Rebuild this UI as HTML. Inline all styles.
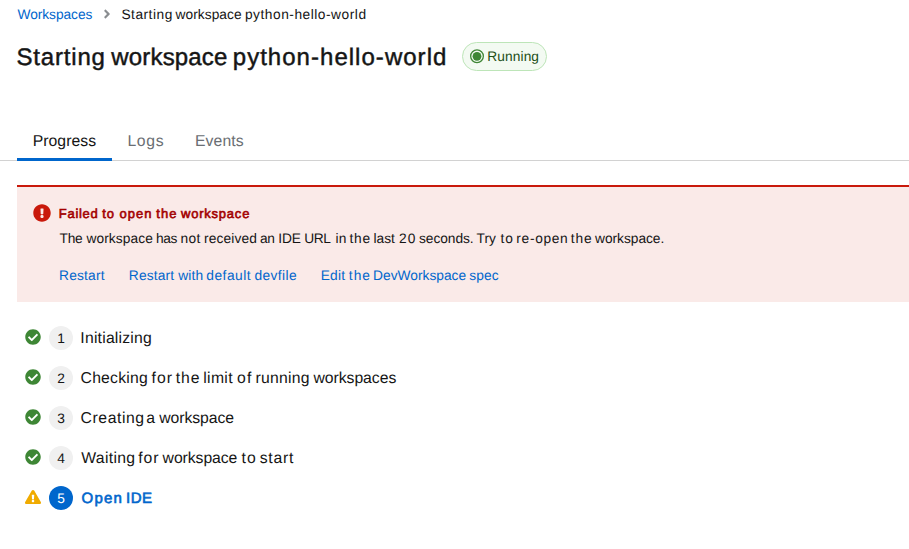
<!DOCTYPE html>
<html lang="en"><head><meta charset="utf-8"><title>Starting workspace python-hello-world</title>
<style>
html,body{margin:0;padding:0;background:#fff;}
body{text-rendering:geometricPrecision;width:909px;height:549px;overflow:hidden;position:relative;font-family:"Liberation Sans",sans-serif;color:#151515;}
.ln{position:absolute;left:0;margin:0;line-height:1;white-space:nowrap;height:1em;text-decoration:none;display:block}
.w{position:absolute;top:0}
.num{position:absolute;left:49px;width:24px;height:24px;border-radius:12px;background:#f0f0f0;font-size:13.75px;line-height:26px;text-align:center;color:#151515;}
svg{position:absolute;display:block;}
</style></head><body>
<svg style="left:99.7px;top:6.9px" width="14" height="14" viewBox="0 0 256 512"><path fill="#8a8d90" d="M224.3 273l-136 136c-9.4 9.4-24.6 9.4-33.9 0l-22.6-22.6c-9.4-9.4-9.4-24.6 0-33.9l96.4-96.4-96.4-96.4c-9.4-9.4-9.4-24.6 0-33.9L54.3 103c9.4-9.4 24.6-9.4 33.9 0l136 136c9.5 9.4 9.5 24.6.1 34z"/></svg>
<div id="badge" style="position:absolute;left:462px;top:42px;width:83px;height:27px;border:1px solid #bde5b8;border-radius:15px;background:#f3faf2;"></div>
<svg style="left:470px;top:49px" width="14" height="15" viewBox="0 0 14 15"><circle cx="7" cy="7.3" r="6.35" fill="none" stroke="#3e8635" stroke-width="1.3"/><circle cx="7" cy="7.3" r="4.4" fill="#3e8635"/></svg>
<div style="position:absolute;left:0;top:160px;width:909px;height:1px;background:#d2d2d2"></div>
<div style="position:absolute;left:17px;top:158px;width:95px;height:3px;background:#06c"></div>
<div id="alert" style="position:absolute;left:17px;top:185px;width:892px;height:117px;background:#faeae8;border-top:2px solid #c9190b;box-sizing:border-box"></div>
<svg style="left:33px;top:204px" width="18" height="18" viewBox="0 0 512 512"><path fill="#c9190b" d="M504 256c0 136.997-111.043 248-248 248S8 392.997 8 256C8 119.083 119.043 8 256 8s248 111.083 248 248zm-248 50c-25.405 0-46 20.595-46 46s20.595 46 46 46 46-20.595 46-46-20.595-46-46-46zm-43.673-165.346l7.418 136c.347 6.364 5.609 11.346 11.982 11.346h48.546c6.373 0 11.635-4.982 11.982-11.346l7.418-136c.375-6.874-5.098-12.654-11.982-12.654h-63.383c-6.884 0-12.356 5.78-11.981 12.654z"/></svg>
<svg style="left:25px;top:328.8px" width="16" height="16" viewBox="0 0 512 512"><path fill="#3e8635" d="M504 256c0 136.967-111.033 248-248 248S8 392.967 8 256 119.033 8 256 8s248 111.033 248 248zM227.314 387.314l184-184c6.248-6.248 6.248-16.379 0-22.627l-22.627-22.627c-6.248-6.249-16.379-6.249-22.628 0L216 308.118l-70.059-70.059c-6.248-6.248-16.379-6.248-22.628 0l-22.627 22.627c-6.248 6.248-6.248 16.379 0 22.627l104 104c6.249 6.249 16.379 6.249 22.628.001z"/></svg>
<div class="num" style="top:325.7px">1</div>
<svg style="left:25px;top:368.8px" width="16" height="16" viewBox="0 0 512 512"><path fill="#3e8635" d="M504 256c0 136.967-111.033 248-248 248S8 392.967 8 256 119.033 8 256 8s248 111.033 248 248zM227.314 387.314l184-184c6.248-6.248 6.248-16.379 0-22.627l-22.627-22.627c-6.248-6.249-16.379-6.249-22.628 0L216 308.118l-70.059-70.059c-6.248-6.248-16.379-6.248-22.628 0l-22.627 22.627c-6.248 6.248-6.248 16.379 0 22.627l104 104c6.249 6.249 16.379 6.249 22.628.001z"/></svg>
<div class="num" style="top:365.7px">2</div>
<svg style="left:25px;top:408.8px" width="16" height="16" viewBox="0 0 512 512"><path fill="#3e8635" d="M504 256c0 136.967-111.033 248-248 248S8 392.967 8 256 119.033 8 256 8s248 111.033 248 248zM227.314 387.314l184-184c6.248-6.248 6.248-16.379 0-22.627l-22.627-22.627c-6.248-6.249-16.379-6.249-22.628 0L216 308.118l-70.059-70.059c-6.248-6.248-16.379-6.248-22.628 0l-22.627 22.627c-6.248 6.248-6.248 16.379 0 22.627l104 104c6.249 6.249 16.379 6.249 22.628.001z"/></svg>
<div class="num" style="top:405.7px">3</div>
<svg style="left:25px;top:448.8px" width="16" height="16" viewBox="0 0 512 512"><path fill="#3e8635" d="M504 256c0 136.967-111.033 248-248 248S8 392.967 8 256 119.033 8 256 8s248 111.033 248 248zM227.314 387.314l184-184c6.248-6.248 6.248-16.379 0-22.627l-22.627-22.627c-6.248-6.249-16.379-6.249-22.628 0L216 308.118l-70.059-70.059c-6.248-6.248-16.379-6.248-22.628 0l-22.627 22.627c-6.248 6.248-6.248 16.379 0 22.627l104 104c6.249 6.249 16.379 6.249 22.628.001z"/></svg>
<div class="num" style="top:445.7px">4</div>
<svg style="left:25px;top:488.7px" width="16" height="16" viewBox="0 0 576 512"><path fill="#f0ab00" d="M569.517 440.013C587.975 472.007 564.806 512 527.94 512H48.054c-36.937 0-59.999-40.055-41.577-71.987L246.423 23.985c18.467-32.009 64.72-31.951 83.154 0l239.94 416.028zM288 354c-25.405 0-46 20.595-46 46s20.595 46 46 46 46-20.595 46-46-20.595-46-46-46zm-43.673-165.346l7.418 136c.347 6.364 5.609 11.346 11.982 11.346h48.546c6.373 0 11.635-4.982 11.982-11.346l7.418-136c.375-6.874-5.098-12.654-11.982-12.654h-63.383c-6.884 0-12.356 5.78-11.981 12.654z"/></svg>
<div class="num" style="top:485.7px;background:#06c;color:#fff">5</div>
<a class="ln" id="bc1" style="top:8.36px;font-size:13.75px;font-weight:400;color:#06c;"><span class="w" style="left:17.50px;letter-spacing:-0.056px">Workspaces</span></a>
<span class="ln" id="bc2" style="top:8.36px;font-size:13.75px;font-weight:400;color:#151515;"><span class="w" style="left:121.40px;letter-spacing:0.500px">Starting</span> <span class="w" style="left:175.60px;letter-spacing:0.031px">workspace</span> <span class="w" style="left:244.95px;letter-spacing:0.515px">python-hello-world</span></span>
<h1 class="ln" id="h1" style="top:46.43px;font-size:24px;font-weight:400;color:#151515;-webkit-text-stroke:0.45px #151515"><span class="w" style="left:16.45px;letter-spacing:0.821px">Starting</span> <span class="w" style="left:111.35px;letter-spacing:0.156px">workspace</span> <span class="w" style="left:232.75px;letter-spacing:1.029px">python-hello-world</span></h1>
<span class="ln" id="run" style="top:50.26px;font-size:13.75px;font-weight:400;color:#1e4f18;"><span class="w" style="left:487.30px;letter-spacing:0.083px">Running</span></span>
<span class="ln" id="tab1" style="top:133.87px;font-size:15.75px;font-weight:400;color:#151515;"><span class="w" style="left:32.65px;letter-spacing:0.071px">Progress</span></span>
<span class="ln" id="tab2" style="top:133.87px;font-size:15.75px;font-weight:400;color:#6a6e73;"><span class="w" style="left:127.45px;letter-spacing:0.667px">Logs</span></span>
<span class="ln" id="tab3" style="top:133.87px;font-size:15.75px;font-weight:400;color:#6a6e73;"><span class="w" style="left:194.95px;letter-spacing:0.100px">Events</span></span>
<h4 class="ln" id="at" style="top:207.16px;font-size:13px;font-weight:400;color:#a30000;-webkit-text-stroke:0.6px #a30000"><span class="w" style="left:58.85px;letter-spacing:0.700px">Failed</span> <span class="w" style="left:102.23px;letter-spacing:1.040px">to</span> <span class="w" style="left:119.57px;letter-spacing:1.040px">open</span> <span class="w" style="left:156.28px;letter-spacing:1.040px">the</span> <span class="w" style="left:181.00px;letter-spacing:0.781px">workspace</span></h4>
<p class="ln" id="ad" style="top:232.36px;font-size:13.75px;font-weight:400;color:#151515;"><span class="w" style="left:59.55px;letter-spacing:-0.250px">The</span> <span class="w" style="left:86.40px;letter-spacing:0.094px">workspace</span> <span class="w" style="left:155.95px;letter-spacing:-0.375px">has</span> <span class="w" style="left:180.55px;letter-spacing:0.375px">not</span> <span class="w" style="left:204.05px;letter-spacing:0.143px">received</span> <span class="w" style="left:260.00px;letter-spacing:-0.500px">an</span> <span class="w" style="left:278.35px;letter-spacing:-0.125px">IDE</span> <span class="w" style="left:304.20px;letter-spacing:-0.375px">URL</span> <span class="w" style="left:335.55px;letter-spacing:0.250px">in</span> <span class="w" style="left:349.45px;letter-spacing:0.750px">the</span> <span class="w" style="left:373.55px;letter-spacing:-0.000px">last</span> <span class="w" style="left:398.96px;letter-spacing:1.025px">20</span> <span class="w" style="left:419.05px;letter-spacing:-0.071px">seconds.</span> <span class="w" style="left:476.55px;letter-spacing:-0.000px">Try</span> <span class="w" style="left:500.54px;letter-spacing:0.875px">to</span> <span class="w" style="left:516.35px;letter-spacing:0.667px">re-open</span> <span class="w" style="left:570.80px;letter-spacing:0.825px">the</span> <span class="w" style="left:595.00px;letter-spacing:-0.028px">workspace.</span></p>
<a class="ln" id="l1" style="top:268.76px;font-size:13.75px;font-weight:400;color:#06c;"><span class="w" style="left:59.00px;letter-spacing:0.208px">Restart</span></a>
<a class="ln" id="l2" style="top:268.76px;font-size:13.75px;font-weight:400;color:#06c;"><span class="w" style="left:128.80px;letter-spacing:0.167px">Restart</span> <span class="w" style="left:178.20px;letter-spacing:0.167px">with</span> <span class="w" style="left:206.30px;letter-spacing:0.500px">default</span> <span class="w" style="left:254.40px;letter-spacing:0.417px">devfile</span></a>
<a class="ln" id="l3" style="top:268.76px;font-size:13.75px;font-weight:400;color:#06c;"><span class="w" style="left:320.70px;letter-spacing:0.250px">Edit</span> <span class="w" style="left:348.87px;letter-spacing:1.000px">the</span> <span class="w" style="left:373.10px;letter-spacing:-0.000px">DevWorkspace</span> <span class="w" style="left:469.20px;letter-spacing:0.167px">spec</span></a>
<span class="ln" id="s1" style="top:330.87px;font-size:15.75px;font-weight:400;color:#151515;"><span class="w" style="left:80.35px;letter-spacing:0.205px">Initializing</span></span>
<span class="ln" id="s2" style="top:370.87px;font-size:15.75px;font-weight:400;color:#151515;"><span class="w" style="left:80.55px;letter-spacing:0.214px">Checking</span> <span class="w" style="left:151.55px;letter-spacing:1.020px">for</span> <span class="w" style="left:175.81px;letter-spacing:0.945px">the</span> <span class="w" style="left:203.30px;letter-spacing:0.312px">limit</span> <span class="w" style="left:236.89px;letter-spacing:1.260px">of</span> <span class="w" style="left:255.50px;letter-spacing:0.250px">running</span> <span class="w" style="left:313.40px;letter-spacing:-0.028px">workspaces</span></span>
<span class="ln" id="s3" style="top:410.87px;font-size:15.75px;font-weight:400;color:#151515;"><span class="w" style="left:80.55px;letter-spacing:0.571px">Creating</span> <span class="w" style="left:146.35px;letter-spacing:0.000px">a</span> <span class="w" style="left:159.30px;letter-spacing:-0.063px">workspace</span></span>
<span class="ln" id="s4" style="top:450.87px;font-size:15.75px;font-weight:400;color:#151515;"><span class="w" style="left:81.30px;letter-spacing:0.292px">Waiting</span> <span class="w" style="left:138.25px;letter-spacing:0.875px">for</span> <span class="w" style="left:162.60px;letter-spacing:-0.062px">workspace</span> <span class="w" style="left:241.42px;letter-spacing:1.160px">to</span> <span class="w" style="left:259.70px;letter-spacing:0.750px">start</span></span>
<span class="ln" id="s5" style="top:491.27px;font-size:15px;font-weight:400;color:#06c;-webkit-text-stroke:0.62px #06c"><span class="w" style="left:81.55px;letter-spacing:1.200px">Open</span> <span class="w" style="left:126.10px;letter-spacing:0.500px">IDE</span></span>
</body></html>
